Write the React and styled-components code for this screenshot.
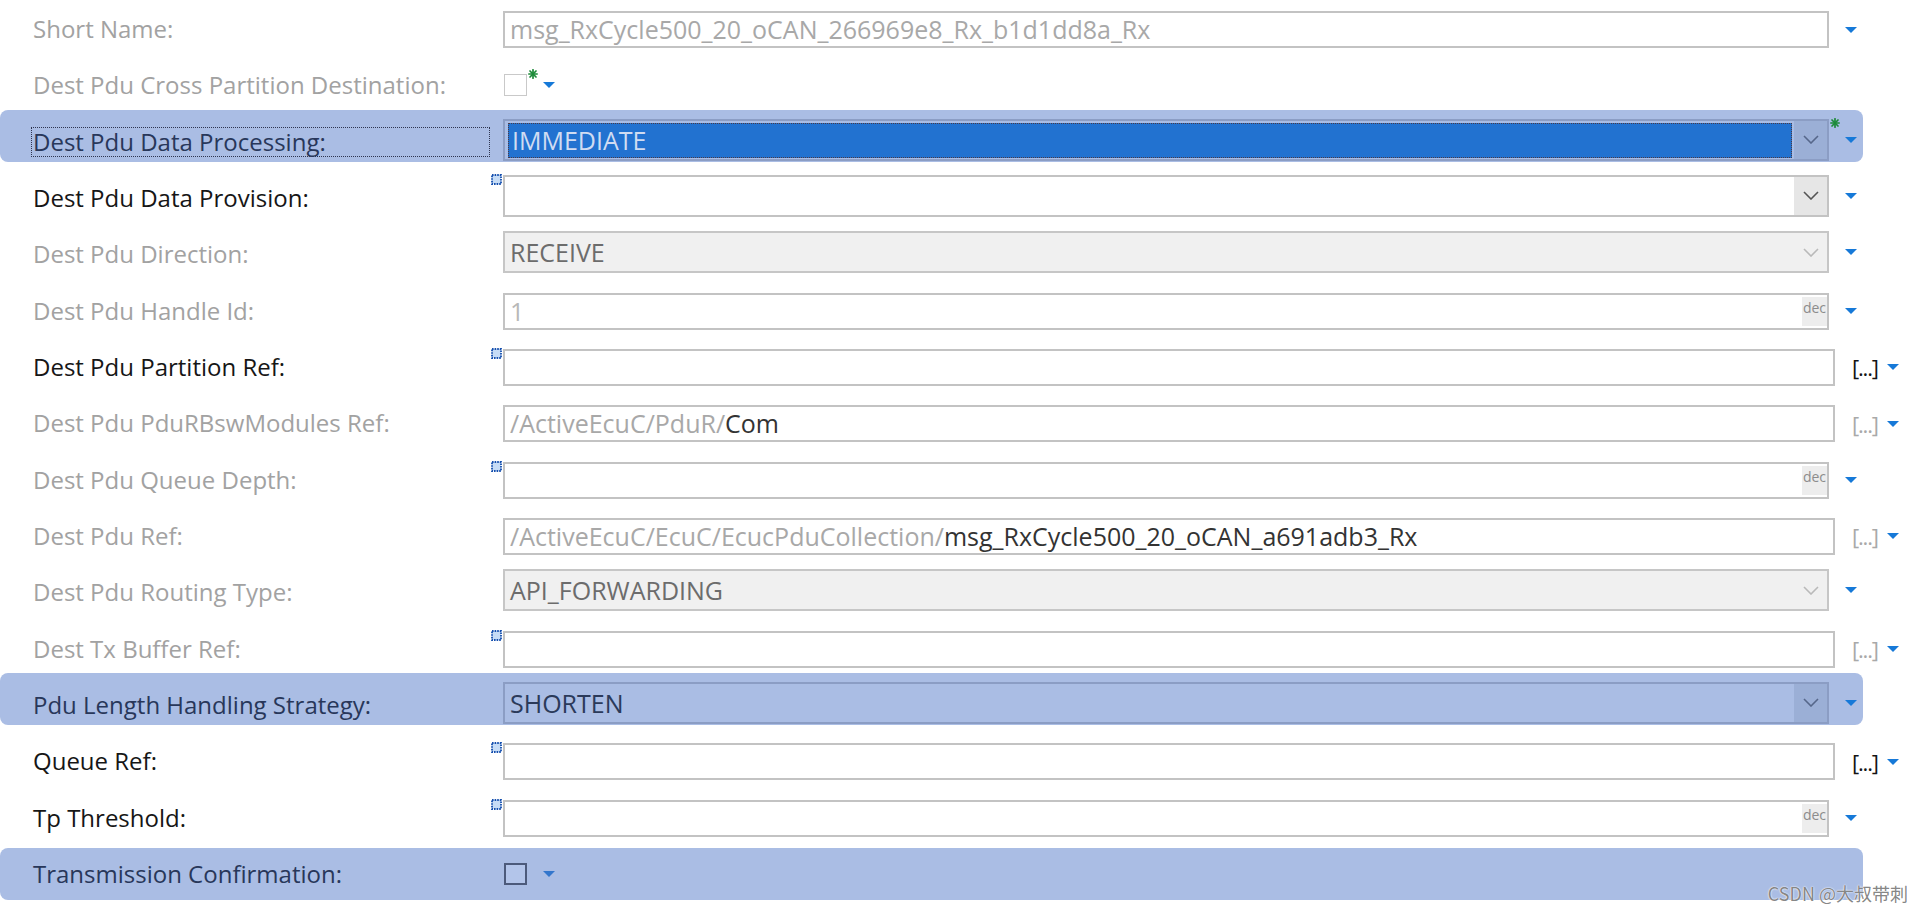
import React from "react";
import styled, { createGlobalStyle } from "styled-components";

const Global = createGlobalStyle`
  html, body { margin: 0; padding: 0; background: #fff; }
  body { font-family: "Open Sans", "Noto Sans", sans-serif; }
`;

const BAND = "#aabde4";

const labelColors = {
  off: "#a2a2a2",
  on: "#161616",
  band: "#28375a",
};

const textColors = {
  off: "#a8a8a8",
  faint: "#b8b8b8",
  dark: "#333333",
};

const combos = {
  normal: { border: "#c3c3c3", bg: "#ffffff", chev: "#e6e6e6", stroke: "#555", color: "#333" },
  disabled: { border: "#c6c6c6", bg: "#f0f0f0", chev: "#f0f0f0", stroke: "#b9b9b9", color: "#6c6c6c" },
  selected: { border: "#8b9dc4", bg: BAND, chev: "#9bafd6", stroke: "#56678a", color: "#d5e0f4" },
  band: { border: "#8b9dc4", bg: BAND, chev: "#9bafd6", stroke: "#56678a", color: "#2b3a5a" },
};

const Page = styled.div`
  position: relative;
  width: 1922px;
  height: 914px;
  overflow: hidden;
  background: #fff;
`;

const List = styled.div`
  display: flex;
  flex-direction: column;
  margin-top: -2.5px;
`;

const Cell = styled.div`
  flex: none;
  height: 56.33px;
  box-sizing: border-box;
  padding-top: ${(p) => (p.$check ? 5.5 : 0)}px;
`;

const Band = styled.div`
  display: flex;
  align-items: ${(p) => (p.$check ? "center" : "flex-end")};
  width: 1863px;
  height: 52px;
  box-sizing: border-box;
  padding: 0 0 ${(p) => (p.$check ? 0 : 1.5)}px 31px;
  border-radius: 8px;
  background: ${(p) => (p.$hl ? BAND : "transparent")};
`;

const Label = styled.div`
  flex: none;
  width: 459px;
  box-sizing: border-box;
  padding-left: 1px;
  margin-bottom: ${(p) => (p.$check ? 0 : 4)}px;
  border: 1px dotted ${(p) => (p.$focus ? "#2e3550" : "transparent")};
  font-size: 24px;
  line-height: 28px;
  white-space: nowrap;
  color: ${(p) => labelColors[p.$tone]};
`;

const FieldRow = styled.div`
  display: flex;
  align-items: center;
`;

const Marker = styled.span`
  flex: none;
  display: flex;
  align-self: flex-start;
  width: ${(p) => (p.$check ? 14 : 13)}px;
  margin-top: -1px;
  padding-left: 1px;
  box-sizing: border-box;
`;

const Input = styled.div`
  flex: none;
  display: flex;
  align-items: center;
  width: ${(p) => p.$w}px;
  height: 37px;
  box-sizing: border-box;
  border: 2px solid #c3c3c3;
  background: #fff;
  padding-left: 5px;
  overflow: hidden;
`;

const Value = styled.div`
  flex: 1;
  font-size: 25px;
  line-height: 33px;
  white-space: nowrap;
  overflow: hidden;
`;

const Part = styled.span`
  color: ${(p) => textColors[p.$tone]};
`;

const Suffix = styled.div`
  flex: none;
  align-self: stretch;
  width: 25px;
  margin: 2px 0;
  box-sizing: border-box;
  padding-top: 3px;
  background: #ededed;
  color: #8c8c8c;
  font-size: 14px;
  line-height: 16px;
  text-align: center;
`;

const Combo = styled.div`
  flex: none;
  display: flex;
  width: 1326px;
  height: 42px;
  box-sizing: border-box;
  border: 2px solid ${(p) => combos[p.$v].border};
  background: ${(p) => combos[p.$v].bg};
`;

const ComboValue = styled.div`
  flex: 1;
  display: flex;
  align-items: center;
  padding-left: 5px;
  font-size: 25px;
  white-space: nowrap;
  color: ${(p) => combos[p.$v].color};
`;

const Selection = styled.div`
  flex: 1;
  align-self: stretch;
  display: flex;
  align-items: center;
  margin: 2px 2px 1px 3px;
  padding-left: 3px;
  border: 1px dotted #4a3a48;
  background: #2272d0;
  color: #d0dcf2;
  font-size: 25px;
  white-space: nowrap;
`;

const ChevronBox = styled.div`
  flex: none;
  width: 33px;
  display: flex;
  align-items: center;
  justify-content: center;
  background: ${(p) => combos[p.$v].chev};
`;

const Box = styled.div`
  flex: none;
  width: 23px;
  height: 22px;
  box-sizing: border-box;
  border: ${(p) => (p.$band ? "2px solid #4c5a7b" : "1.5px solid #c9c9c9")};
  background: ${(p) => (p.$band ? "#b3c5ea" : "#fff")};
`;

const Trail = styled.div`
  flex: none;
  align-self: stretch;
  display: flex;
  align-items: center;
  padding-left: ${(p) => (p.$star ? 1 : p.$browse ? 17 : 16)}px;
`;

const Star = styled.span`
  display: flex;
  align-self: flex-start;
  margin-top: ${(p) => (p.$check ? -5 : -1)}px;
  margin-right: 5px;
`;

const Browse = styled.span`
  margin-right: 9px;
  font-size: 22px;
  line-height: 26px;
  letter-spacing: -1.2px;
  color: ${(p) => (p.$on ? "#141414" : "#a9a9a9")};
`;

const Watermark = styled.div`
  position: absolute;
  right: 14px;
  bottom: 8px;
  font-family: "Noto Sans CJK SC", "Noto Sans", sans-serif;
  font-size: 18px;
  color: rgba(118, 118, 118, 0.9);
  text-shadow: 0 0 2px #fff, 0 0 1px #fff;
  white-space: nowrap;
`;

const MarkerIcon = () => (
  <svg width="11" height="11" viewBox="0 0 11 11">
    <rect x="1" y="1" width="9" height="9" fill="#c6dcf6" stroke="#154fae" strokeWidth="1.8" strokeDasharray="1.6 1" />
  </svg>
);

const StarIcon = () => (
  <svg width="10" height="10" viewBox="0 0 10 10" stroke="#1c8a38" strokeWidth="1.7" strokeLinecap="round">
    <line x1="5" y1="0.8" x2="5" y2="9.2" />
    <line x1="0.8" y1="5" x2="9.2" y2="5" />
    <line x1="2" y1="2" x2="8" y2="8" />
    <line x1="8" y1="2" x2="2" y2="8" />
  </svg>
);

const Triangle = ({ color = "#1679d8" }) => (
  <svg width="12" height="6" viewBox="0 0 12 6">
    <polygon points="0,0 12,0 6,6" fill={color} />
  </svg>
);

const Chevron = ({ color }) => (
  <svg width="16" height="9" viewBox="0 0 16 9">
    <polyline points="1,1 8,8 15,1" fill="none" stroke={color} strokeWidth="1.6" />
  </svg>
);

const rows = [
  { label: "Short Name:", tone: "off", kind: "text", value: [["msg_RxCycle500_20_oCAN_266969e8_Rx_b1d1dd8a_Rx", "off"]] },
  { label: "Dest Pdu Cross Partition Destination:", tone: "off", kind: "check", star: true },
  { label: "Dest Pdu Data Processing:", tone: "band", kind: "combo", variant: "selected", value: "IMMEDIATE", star: true, focus: true, hl: true },
  { label: "Dest Pdu Data Provision:", tone: "on", kind: "combo", variant: "normal", value: "", marker: true },
  { label: "Dest Pdu Direction:", tone: "off", kind: "combo", variant: "disabled", value: "RECEIVE" },
  { label: "Dest Pdu Handle Id:", tone: "off", kind: "text", value: [["1", "faint"]], dec: true },
  { label: "Dest Pdu Partition Ref:", tone: "on", kind: "text", browse: "on", marker: true },
  { label: "Dest Pdu PduRBswModules Ref:", tone: "off", kind: "text", browse: "off", value: [["/ActiveEcuC/PduR/", "off"], ["Com", "dark"]] },
  { label: "Dest Pdu Queue Depth:", tone: "off", kind: "text", dec: true, marker: true },
  {
    label: "Dest Pdu Ref:",
    tone: "off",
    kind: "text",
    browse: "off",
    value: [["/ActiveEcuC/EcuC/EcucPduCollection/", "off"], ["msg_RxCycle500_20_oCAN_a691adb3_Rx", "dark"]],
  },
  { label: "Dest Pdu Routing Type:", tone: "off", kind: "combo", variant: "disabled", value: "API_FORWARDING" },
  { label: "Dest Tx Buffer Ref:", tone: "off", kind: "text", browse: "off", marker: true },
  { label: "Pdu Length Handling Strategy:", tone: "band", kind: "combo", variant: "band", value: "SHORTEN", hl: true },
  { label: "Queue Ref:", tone: "on", kind: "text", browse: "on", marker: true },
  { label: "Tp Threshold:", tone: "on", kind: "text", dec: true, marker: true },
  { label: "Transmission Confirmation:", tone: "band", kind: "check", hl: true },
];

const Field = ({ row }) => {
  if (row.kind === "check") return <Box $band={row.hl} />;
  if (row.kind === "combo") {
    const v = row.variant;
    return (
      <Combo $v={v}>
        {v === "selected" ? (
          <Selection>{row.value}</Selection>
        ) : (
          <ComboValue $v={v}>{row.value}</ComboValue>
        )}
        <ChevronBox $v={v}>
          <Chevron color={combos[v].stroke} />
        </ChevronBox>
      </Combo>
    );
  }
  return (
    <Input $w={row.browse ? 1332 : 1326}>
      <Value>
        {(row.value || []).map(([t, tone]) => (
          <Part key={t} $tone={tone}>
            {t}
          </Part>
        ))}
      </Value>
      {row.dec && <Suffix>dec</Suffix>}
    </Input>
  );
};

const PropertyRow = ({ row }) => {
  const check = row.kind === "check";
  return (
    <Cell $check={check}>
      <Band $check={check} $hl={row.hl}>
        <Label $tone={row.tone} $focus={row.focus} $check={check}>
          {row.label}
        </Label>
        <FieldRow>
          <Marker $check={check}>{row.marker && <MarkerIcon />}</Marker>
          <Field row={row} />
          <Trail $star={row.star} $browse={!!row.browse}>
            {row.star && (
              <Star $check={check}>
                <StarIcon />
              </Star>
            )}
            {row.browse && <Browse $on={row.browse === "on"}>[...]</Browse>}
            <Triangle color={check && row.hl ? "#3376cc" : undefined} />
          </Trail>
        </FieldRow>
      </Band>
    </Cell>
  );
};

export default function App() {
  return (
    <>
      <Global />
      <Page>
        <List>
          {rows.map((row) => (
            <PropertyRow key={row.label} row={row} />
          ))}
        </List>
        <Watermark>CSDN @大叔带刺</Watermark>
      </Page>
    </>
  );
}
